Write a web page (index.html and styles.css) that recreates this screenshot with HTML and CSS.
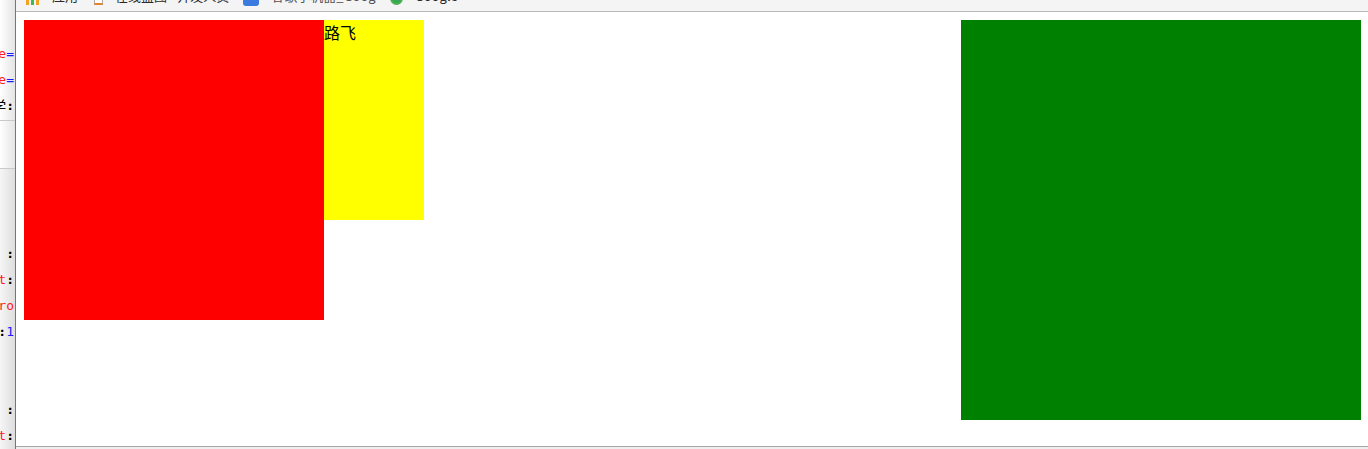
FILE: index.html
```html
<!DOCTYPE html>
<html>
<head>
<meta charset="utf-8">
<link rel="stylesheet" href="styles.css">
</head>
<body>
<div class="screen">
  <div class="side">
    <div class="side-top">
      <div class="code-line"><span class="k">e</span><span class="op">=</span></div>
      <div class="code-line"><span class="k">e</span><span class="op">=</span></div>
      <div class="code-line"><span class="t">学</span><span class="c">:</span></div>
    </div>
    <div class="side-mid"></div>
    <div class="side-bottom">
      <div class="code-line"><span class="c">:</span></div>
      <div class="code-line"><span class="k">t</span><span class="c">:</span></div>
      <div class="code-line"><span class="k">ro</span></div>
      <div class="code-line"><span class="c">:</span><span class="op">1</span></div>
      <div class="code-gap"></div>
      <div class="code-line"><span class="c">:</span></div>
      <div class="code-line"><span class="k">t</span><span class="c">:</span></div>
    </div>
  </div>
  <div class="browser">
    <div class="bookmarks">
      <span class="bm-icon apps"><i></i><i></i><i></i></span>
      <span class="bm-text">应用</span>
      <span class="bm-icon doc"></span>
      <span class="bm-text">在线盗图 - 开发人员</span>
      <span class="bm-icon people"></span>
      <span class="bm-text faded">谷歌小机器_Goog</span>
      <span class="bm-icon chrome"></span>
      <span class="bm-text">Google</span>
    </div>
    <div class="viewport">
      <div class="left-group">
        <div class="box red"></div>
        <div class="box yellow">路飞</div>
      </div>
      <div class="box green"></div>
    </div>
    <div class="status"></div>
  </div>
</div>
</body>
</html>
```
FILE: styles.css
```css
html, body {
  margin: 0;
  padding: 0;
  background: #ffffff;
}
.screen {
  width: 1368px;
  height: 449px;
  display: flex;
  overflow: hidden;
}
.side {
  width: 15px;
  border-right: 1px solid #3f82c8;
  display: flex;
  flex-direction: column;
  background: linear-gradient(to right, #f6f6f6, #dedede);
  font-family: "DejaVu Sans Mono", "Liberation Mono", "Noto Sans CJK SC", monospace;
  font-size: 13px;
}
.side-top {
  height: 127px;
  padding-top: 41px;
  box-sizing: border-box;
  border-bottom: 1px solid #c9c9c9;
  background: linear-gradient(to right, #ffffff, #e4e4e4);
}
.side-mid {
  height: 50px;
  border-bottom: 1px solid #c9c9c9;
  background: linear-gradient(to right, #ffffff, #e4e4e4);
}
.side-bottom {
  flex: 1;
  padding-top: 72px;
}
.code-line {
  height: 26px;
  line-height: 26px;
  display: flex;
  justify-content: flex-end;
  overflow: hidden;
  white-space: nowrap;
  padding-right: 1px;
}
.code-gap {
  height: 52px;
}
.k { color: #ff1a1a; }
.op { color: #1a1aff; }
.c { color: #000000; font-weight: bold; }
.t { color: #000000; font-family: "Noto Sans CJK SC", sans-serif; font-size: 15px; }

.browser {
  flex: 1;
  display: flex;
  flex-direction: column;
}
.bookmarks {
  height: 11px;
  border-bottom: 1px solid #b9b9b9;
  background: #f4f4f4;
  overflow: hidden;
  display: flex;
  align-items: flex-start;
  font-family: "Noto Sans CJK SC", sans-serif;
  font-size: 13px;
  color: #2a2a2a;
  white-space: nowrap;
  padding-left: 10px;
}
.bm-text {
  margin-top: -14px;
  line-height: 19px;
  margin-right: 14px;
}
.bm-text.faded { color: #555555; }
.bm-icon {
  display: inline-block;
  width: 14px;
  height: 14px;
  margin-top: -9px;
  margin-right: 12px;
}
.apps {
  display: flex;
  gap: 2px;
  width: 14px;
}
.apps i {
  display: block;
  width: 3px;
  height: 14px;
  background: #f4a321;
}
.apps i:nth-child(2) { background: #3cba54; }
.apps i:nth-child(3) { background: #f4a321; }
.doc {
  width: 9px;
  border: 1px solid #a8a8a8;
  border-bottom: 2px solid #e8812d;
  margin-left: 2px;
  background: #fff;
  box-sizing: border-box;
}
.people {
  width: 16px;
  height: 15px;
  background: #3b7be0;
  border-radius: 3px;
}
.chrome {
  width: 13px;
  height: 14px;
  border-radius: 50%;
  background: #34a853;
  border: 2px solid #4caf50;
  box-sizing: border-box;
}
.viewport {
  flex: 1;
  padding: 8px 7px 8px 8px;
  display: flex;
  justify-content: space-between;
  align-items: flex-start;
}
.left-group {
  display: flex;
  align-items: flex-start;
}
.box { flex: none; }
.red {
  width: 300px;
  height: 300px;
  background: #ff0000;
}
.yellow {
  width: 100px;
  height: 200px;
  background: #ffff00;
  font-family: "Noto Sans CJK SC", sans-serif;
  font-size: 16px;
  line-height: 24px;
  color: #000;
}
.green {
  width: 400px;
  height: 400px;
  background: #008000;
}
.status {
  height: 2px;
  border-top: 1px solid #a5a5a5;
  background: #efefef;
}
```
